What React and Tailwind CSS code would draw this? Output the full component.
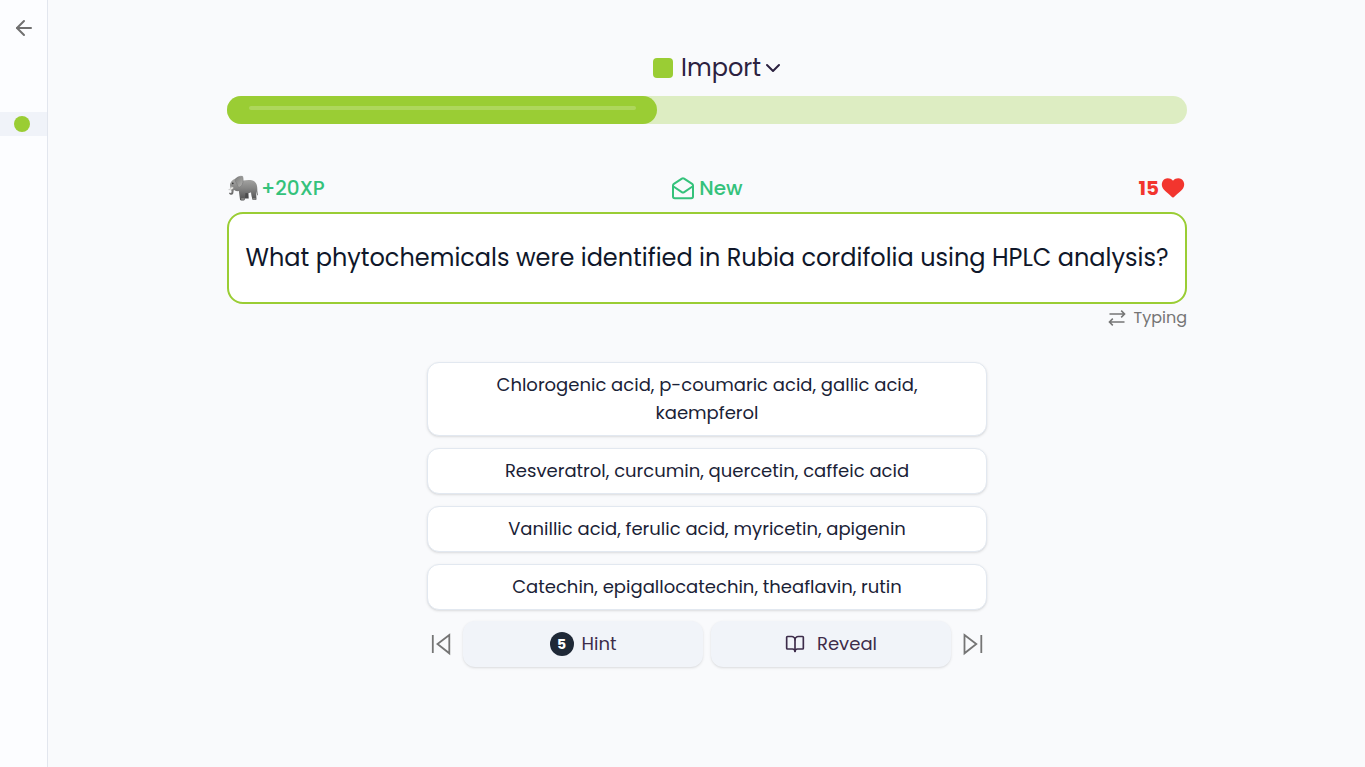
import { ArrowLeft, BookOpen } from "lucide-react";

const answers = [
  "Chlorogenic acid, p-coumaric acid, gallic acid, kaempferol",
  "Resveratrol, curcumin, quercetin, caffeic acid",
  "Vanillic acid, ferulic acid, myricetin, apigenin",
  "Catechin, epigallocatechin, theaflavin, rutin",
];

function Elephant() {
  return (
    <svg viewBox="0 0 32 28" className="h-7 w-8" role="img" aria-label="Elephant">
      <defs>
        <linearGradient id="hide" x1="0" y1="0" x2="0" y2="1">
          <stop offset="0" stopColor="#a9a9a7" />
          <stop offset="0.450" stopColor="#858584" />
          <stop offset="1" stopColor="#4e4e4f" />
        </linearGradient>
        <linearGradient id="ear" x1="0" y1="0" x2="1" y2="1">
          <stop offset="0" stopColor="#7b7b7a" />
          <stop offset="1" stopColor="#b4b4b1" />
        </linearGradient>
      </defs>
      <path d="M17.500 17h3.800l.4 7.600h-3.800ZM24.200 16h3.600l.2 8h-3Z" fill="#4b4b4c" />
      <path
        d="M3.400 9C5 5.500 9 3.600 12.500 4.400c1.600.5 2.800 1.800 4 2 3-.6 8.500-1 11 1 2.500 2 3 5.500 2.800 9.200l.6 4.400-.6.6-1.200-4.400.4 8.200c-1.200.7-3 .7-4.200 0l-1.200-7.200c-1.600.9-4 1.200-5.600.9l-.8 6.900c-1.400.7-3.200.7-4.600 0l-1.300-9c-2.200.4-4-.2-4.900-1.200-.6 1.500-.2 3.200-.9 4.200-1 1.200-3 .8-4-.5l.5-.9c1 .6 1.800.5 2-.4C5 16 2 12.500 3.400 9Z"
        fill="url(#hide)"
      />
      <path
        d="M8.200 5.500C9.500 3 13 1.800 15.600 2.400c.8 2 .8 5.500-.4 8.200-.8 1.600-2.200 2.800-3.400 2.600-1.600-.6-1.300-2.600-2.200-4.100-.6-1-1.900-2-1.400-3.600Z"
        fill="url(#ear)"
        stroke="#727272"
        strokeWidth=".5"
      />
      <path d="M6.600 13.800c-1 1.800-3 2.600-5 1.800 1.600-.3 2.700-1.400 3.100-3Z" fill="#f1f0eb" stroke="#999" strokeWidth=".3" />
      <circle cx="5.800" cy="9.400" r=".8" fill="#303030" />
      <path d="M14.200 25h3M25.700 25h3" stroke="#c9c9c5" strokeWidth=".8" />
    </svg>
  );
}

function OpenEnvelope() {
  return (
    <svg viewBox="0 0 24 24" className="size-6" fill="none" stroke="currentColor" strokeWidth="2" strokeLinecap="round" strokeLinejoin="round" aria-hidden="true">
      <path d="M2 9.500v11a1.800 1.800 0 0 0 1.800 1.800h16.400a1.800 1.800 0 0 0 1.800-1.800v-11a2 2 0 0 0-.9-1.600l-8-5.300a2 2 0 0 0-2.200 0l-8 5.300A2 2 0 0 0 2 9.500Z" />
      <path d="m2.500 10.500 8.300 5.600a2.200 2.200 0 0 0 2.400 0l8.300-5.600" />
    </svg>
  );
}

function Swap() {
  return (
    <svg viewBox="0 0 18 18" className="size-[18px]" fill="none" stroke="currentColor" strokeWidth="1.500" aria-hidden="true">
      <path d="M1.500 5h15M13.200 1.600 16.600 5l-3.400 3.400M16.500 13h-15M4.800 9.600 1.400 13l3.400 3.400" />
    </svg>
  );
}

function Heart() {
  return (
    <svg viewBox="0 0 24 24" className="size-6" fill="currentColor" aria-hidden="true">
      <path d="M11.3 21.2C10.2 20 3.6 14.6 2 12.4.6 10.500.4 7.700 1.500 5.600 3.500 1.700 8.700 1.200 12 4.800c3.300-3.600 8.500-3.100 10.500.8 1.100 2.100.9 4.900-.5 6.800-1.600 2.200-8.200 7.600-9.300 8.800-.4.4-1 .4-1.400 0Z" />
    </svg>
  );
}

function SkipIcon({ flip }) {
  return (
    <svg viewBox="0 0 28 28" className="size-7" fill="none" stroke="currentColor" strokeWidth="1.800" aria-hidden="true">
      {flip ? <path d="M5.500 5 17.300 14 5.500 23.300ZM22.300 5v18" /> : <path d="M22.300 5 10.500 14l11.800 9.300ZM5.800 5v18" />}
    </svg>
  );
}

export default function App() {
  return (
    <div className="flex min-h-screen bg-[#f9fafc] font-['Poppins','Inter',sans-serif] text-[#0f172a]">
      <aside className="flex w-12 shrink-0 flex-col border-r border-[#e2e6ee] bg-[#fcfdff]">
        <button aria-label="Back" className="flex h-14 items-center justify-center text-[#707070]">
          <ArrowLeft className="size-6" strokeWidth={2} />
        </button>
        <button aria-label="Import deck" className="mt-14 flex h-6 items-center bg-[#f0f3f9] pl-[14px]">
          <span className="size-4 rounded-full bg-[#9acd34]" />
        </button>
      </aside>

      <main className="min-w-0 flex-1 pt-12 pr-6 pl-[25px]">
        <div className="mx-auto max-w-[960px]">
          <button className="mx-auto flex h-10 items-center pl-5 text-2xl text-[#2c2140]">
            <span className="mr-2 size-5 rounded bg-[#9acd34]" />
            Import
            <svg viewBox="0 0 16 16" className="ml-1 size-4" fill="none" stroke="currentColor" strokeWidth="2" strokeLinecap="round" strokeLinejoin="round" aria-hidden="true">
              <path d="m2 5 6 6 6-6" />
            </svg>
          </button>

          <div className="mt-2 h-7 rounded-[14px] bg-[#ddedc2]" role="progressbar" aria-valuenow={45} aria-label="Progress">
            <div className="flex h-full w-[44.8%] justify-center rounded-[14px] bg-[#9acd34] pt-2.5">
              <span className="h-1 w-[90%] rounded-full bg-white/20" />
            </div>
          </div>

          <div className="mt-12 grid h-8 grid-cols-3 items-center text-xl text-[#34c27b]">
            <span className="flex items-center gap-0.5 font-medium">
              <Elephant />
              +20XP
            </span>
            <span className="flex items-center justify-center gap-1 font-medium">
              <OpenEnvelope />
              New
            </span>
            <span className="flex items-center justify-end gap-0.5 pr-0.5 font-bold text-[#f2352e]">
              15
              <Heart />
            </span>
          </div>

          <h1 className="mt-2 flex min-h-23 items-center justify-center rounded-2xl border-2 border-[#9acd34] bg-white px-4 text-center text-2xl">
            What phytochemicals were identified in Rubia cordifolia using HPLC analysis?
          </h1>

          <button className="ml-auto flex h-7 items-center gap-2 text-base text-[#757575]">
            <Swap />
            Typing
          </button>

          <div className="mx-auto mt-[30px] max-w-[560px]">
            <div className="flex flex-col gap-3">
              {answers.map((answer) => (
                <button key={answer} className="rounded-xl border border-[#e2e8f0] bg-white px-12 py-2 text-lg leading-7 text-[#1a2236] shadow-sm">
                  {answer}
                </button>
              ))}
            </div>

            <div className="mt-[11px] flex h-[46px] items-center gap-2 text-lg text-[#3d2c4a]">
              <button aria-label="Previous" className="text-[#757575]"><SkipIcon /></button>
              <button className="flex h-full flex-1 items-center justify-center gap-2 rounded-xl bg-[#f1f4f9] shadow-sm">
                <span className="flex size-6 items-center justify-center rounded-full bg-[#1f2937] text-sm font-bold text-white">5</span>
                Hint
              </button>
              <button className="flex h-full flex-1 items-center justify-center gap-3 rounded-xl bg-[#f1f4f9] shadow-sm">
                <BookOpen className="size-5" strokeWidth={2} />
                Reveal
              </button>
              <button aria-label="Next" className="text-[#757575]"><SkipIcon flip /></button>
            </div>
          </div>
        </div>
      </main>
    </div>
  );
}
